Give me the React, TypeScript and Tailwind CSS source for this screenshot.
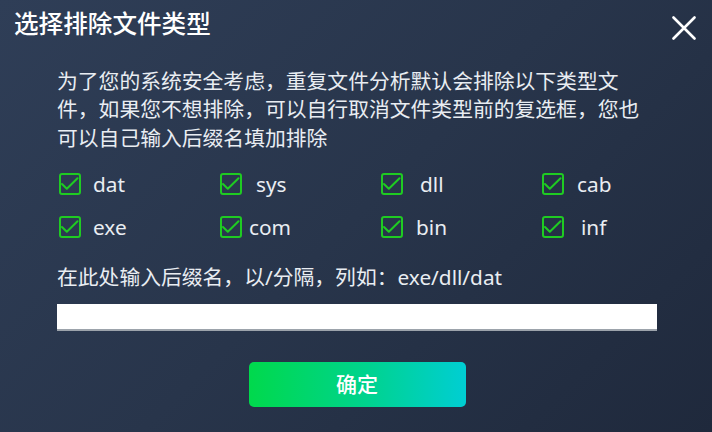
import React from "react";

const FONT = {
	fontFamily: '"Noto Sans", "Noto Sans CJK SC", sans-serif',
};

const types = [
	{ name: "dat", gap: "ml-[12px]" },
	{ name: "sys", gap: "ml-[14px]" },
	{ name: "dll", gap: "ml-[17px]" },
	{ name: "cab", gap: "ml-[13px]" },
	{ name: "exe", gap: "ml-[12px]" },
	{ name: "com", gap: "ml-[7px]" },
	{ name: "bin", gap: "ml-[13px]" },
	{ name: "inf", gap: "ml-[17px]" },
];

function CheckBox() {
	return (
		<span className="flex h-[22px] w-[22px] shrink-0 items-center justify-center rounded-[3px] border-2 border-[#1fcb22]">
			<svg width="18" height="18" viewBox="0 0 18 18" fill="none">
				<path
					d="M1 9 L5.8 13.8 L16.5 3.2"
					stroke="#1fcb22"
					strokeWidth="2"
					strokeLinecap="round"
					strokeLinejoin="round"
				/>
			</svg>
		</span>
	);
}

export default function App() {
	return (
		<div
			className="h-[432px] w-[712px] overflow-hidden bg-[linear-gradient(135deg,#2f3e57_0%,#28354b_50%,#1f293c_100%)] text-[#e9edf2]"
			style={FONT}
		>
			<div className="flex items-start justify-between pl-[14px] pr-[16px] pt-[8px]">
				<h1 className="text-[24.6px] font-medium leading-[32px] text-white">
					选择排除文件类型
				</h1>
				<button className="mt-[8px] text-white" aria-label="关闭">
					<svg width="24" height="24" viewBox="0 0 24 24" fill="none">
						<path
							d="M1.5 1.5 L22.5 22.5 M22.5 1.5 L1.5 22.5"
							stroke="currentColor"
							strokeWidth="2.6"
							strokeLinecap="round"
						/>
					</svg>
				</button>
			</div>

			<div className="pl-[57px] pr-[57px]">
				<p className="mt-[27px] text-[20.8px] leading-[28.3px]">
					为了您的系统安全考虑，重复文件分析默认会排除以下类型文件，如果您不想排除，可以自行取消文件类型前的复选框，您也可以自己输入后缀名填加排除
				</p>

				<div className="mt-[11px] ml-[2px] grid grid-cols-[161px_161px_161px_161px]">
					{types.map((t) => (
						<label
							key={t.name}
							className="flex h-[43px] items-center text-[20.8px]"
						>
							<CheckBox />
							<span className={t.gap}>{t.name}</span>
						</label>
					))}
				</div>

				<div className="mt-[14px] text-[20.8px] leading-[28.3px]">
					在此处输入后缀名，以/分隔，列如：exe/dll/dat
				</div>

				<input
					type="text"
					className="mt-[13px] block h-[27px] w-[600px] border-b-2 border-[#9ca3ab] bg-white px-2 text-[16px] text-gray-800 outline-none"
				/>

				<div className="mt-[31px] flex justify-center pl-[2px]">
					<button className="h-[45px] w-[217px] rounded-[5px] bg-[linear-gradient(90deg,#00d94c_0%,#00d38f_55%,#00ced3_100%)] text-[21px] font-medium text-white">
						确定
					</button>
				</div>
			</div>
		</div>
	);
}
